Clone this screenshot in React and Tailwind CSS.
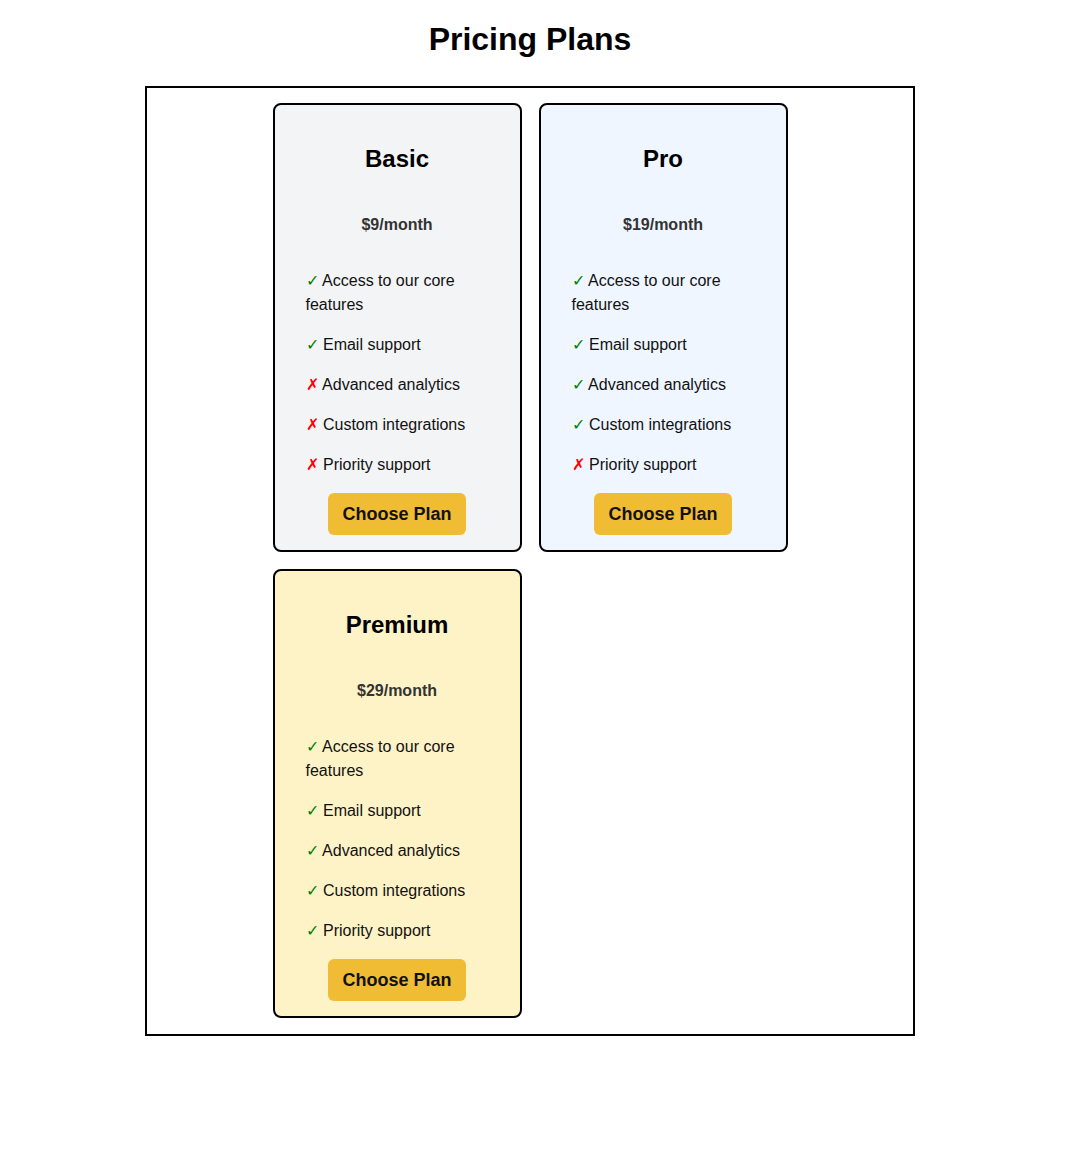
import React from "react";

const FEATURES = [
  "Access to our core features",
  "Email support",
  "Advanced analytics",
  "Custom integrations",
  "Priority support",
];

const PLANS = [
  { name: "Basic", price: "$9/month", included: 2, bg: "bg-[#f3f4f6]" },
  { name: "Pro", price: "$19/month", included: 4, bg: "bg-[#eff6ff]" },
  { name: "Premium", price: "$29/month", included: 5, bg: "bg-[#fef3c7]" },
];

function PlanCard({ plan }) {
  return (
    <div
      className={`flex w-[249px] flex-col items-center rounded-[8px] border-2 border-black px-[31px] pt-[40px] pb-[15px] ${plan.bg}`}
    >
      <h2 className="text-[24px] font-bold leading-[28px] text-black">{plan.name}</h2>
      <p className="mt-[43px] text-[16px] font-bold leading-[18px] text-[#333333]">{plan.price}</p>
      <ul className="mt-[35px] self-stretch">
        {FEATURES.map((f, i) => {
          const ok = i < plan.included;
          return (
            <li key={f} className="mb-[16px] text-[16px] leading-[24px] text-[#111111]">
              <span className={ok ? "text-[#008000]" : "text-[#ff0000]"}>{ok ? "✓" : "✗"}</span> {f}
            </li>
          );
        })}
      </ul>
      <button className="h-[42px] w-[138px] rounded-[6px] bg-[#f0bc33] text-[18px] font-bold text-[#111111]">
        Choose Plan
      </button>
    </div>
  );
}

export default function App() {
  return (
    <div
      className="flex w-[1060px] flex-col items-center bg-white pt-[21px]"
      style={{ fontFamily: '"Liberation Sans", Arial, sans-serif' }}
    >
      <h1 className="mb-[28px] text-[32px] font-bold leading-[37px] text-black">Pricing Plans</h1>
      <div className="grid w-[770px] grid-cols-[249px_249px] content-start justify-center gap-[17px] border-2 border-black pt-[15px] pb-[16px]">
        {PLANS.map((p) => (
          <PlanCard key={p.name} plan={p} />
        ))}
      </div>
    </div>
  );
}
